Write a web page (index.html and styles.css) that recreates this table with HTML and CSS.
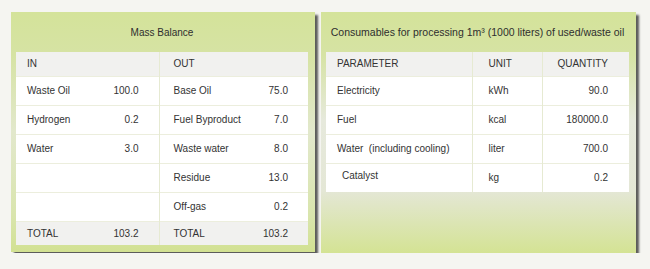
FILE: index.html
```html
<!DOCTYPE html>
<html>
<head>
<meta charset="utf-8">
<link rel="stylesheet" href="styles.css">
</head>
<body>
<div class="wrap">
  <div class="panel panel-left">
    <div class="title">Mass Balance</div>
    <table class="grid mass">
      <colgroup><col class="c1"><col class="c2"><col class="c3"><col class="c4"></colgroup>
      <tr class="head"><td>IN</td><td></td><td class="split">OUT</td><td></td></tr>
      <tr><td>Waste Oil</td><td class="num">100.0</td><td class="split">Base Oil</td><td class="num">75.0</td></tr>
      <tr><td>Hydrogen</td><td class="num">0.2</td><td class="split">Fuel Byproduct</td><td class="num">7.0</td></tr>
      <tr><td>Water</td><td class="num">3.0</td><td class="split">Waste water</td><td class="num">8.0</td></tr>
      <tr><td></td><td></td><td class="split">Residue</td><td class="num">13.0</td></tr>
      <tr><td></td><td></td><td class="split">Off-gas</td><td class="num">0.2</td></tr>
      <tr class="foot"><td>TOTAL</td><td class="num">103.2</td><td class="split">TOTAL</td><td class="num">103.2</td></tr>
    </table>
  </div>
  <div class="panel panel-right">
    <div class="title title-wide">Consumables for processing 1m³ (1000 liters) of used/waste oil</div>
    <table class="grid cons">
      <colgroup><col class="d1"><col class="d2"><col class="d3"></colgroup>
      <tr class="head"><td>PARAMETER</td><td class="split unit">UNIT</td><td class="split num">QUANTITY</td></tr>
      <tr><td>Electricity</td><td class="split unit">kWh</td><td class="split num">90.0</td></tr>
      <tr><td>Fuel</td><td class="split unit">kcal</td><td class="split num">180000.0</td></tr>
      <tr><td>Water&nbsp; (including cooling)</td><td class="split unit">liter</td><td class="split num">700.0</td></tr>
      <tr><td class="shift">Catalyst</td><td class="split unit">kg</td><td class="split num">0.2</td></tr>
    </table>
  </div>
</div>
</body>
</html>
```
FILE: styles.css
```css
html, body {
  margin: 0;
  padding: 0;
  background: #f5f5f1;
}
body {
  font-family: "Liberation Sans", Arial, sans-serif;
  font-size: 10px;
  color: #333;
}
.wrap {
  display: flex;
  gap: 6px;
  padding: 12px 0 0 11px;
  align-items: flex-start;
}
.panel {
  box-sizing: border-box;
  padding: 0 7px 0 5px;
  background: linear-gradient(to bottom, #d4e39a 0%, #d6e3a4 18%, #e6e9dc 45%, #e4e7d6 74%, #d4e394 100%);
  box-shadow: 3px 3px 2px rgba(40, 40, 40, 0.75);
}
.panel-left {
  width: 304px;
  height: 240px;
  background: linear-gradient(to bottom, #d4e39a 0%, #d6e3a4 18%, #e2e8cc 50%, #d9e5ad 85%, #d2e192 100%);
}
.panel-right {
  width: 315px;
  height: 241px;
}
.title {
  height: 40px;
  display: flex;
  align-items: center;
  justify-content: center;
  color: #2e2e2e;
  font-size: 10px;
}
.title-wide {
  font-size: 10.5px;
}
.grid {
  width: 100%;
  border-collapse: collapse;
  table-layout: fixed;
  background: #fff;
}
.grid td {
  height: 29px;
  padding: 0 0 0 11px;
  border-top: 1px solid #eceedd;
  box-sizing: border-box;
  white-space: nowrap;
  vertical-align: middle;
}
.grid tr.head td {
  height: 24px;
  background: #f1f1ef;
  border-top: none;
}
.grid tr.foot td {
  height: 24px;
  background: #f1f1ef;
}
.grid td.split {
  border-left: 1px solid #e6ead2;
}
.mass td.split {
  padding-left: 14px;
}
.grid td.num {
  text-align: right;
  padding: 0 20px 0 0;
}
.mass .c1 { width: 85px; }
.mass .c2 { width: 58px; }
.mass .c3 { width: 90px; }
.mass .c4 { width: 59px; }
.cons .d1 { width: 146px; }
.cons .d2 { width: 70px; }
.cons .d3 { width: 87px; }
.cons td.unit { padding-left: 16px; }
.cons td.num { padding-right: 21px; }
.cons td.shift { padding-left: 16px; padding-bottom: 4px; }
```
